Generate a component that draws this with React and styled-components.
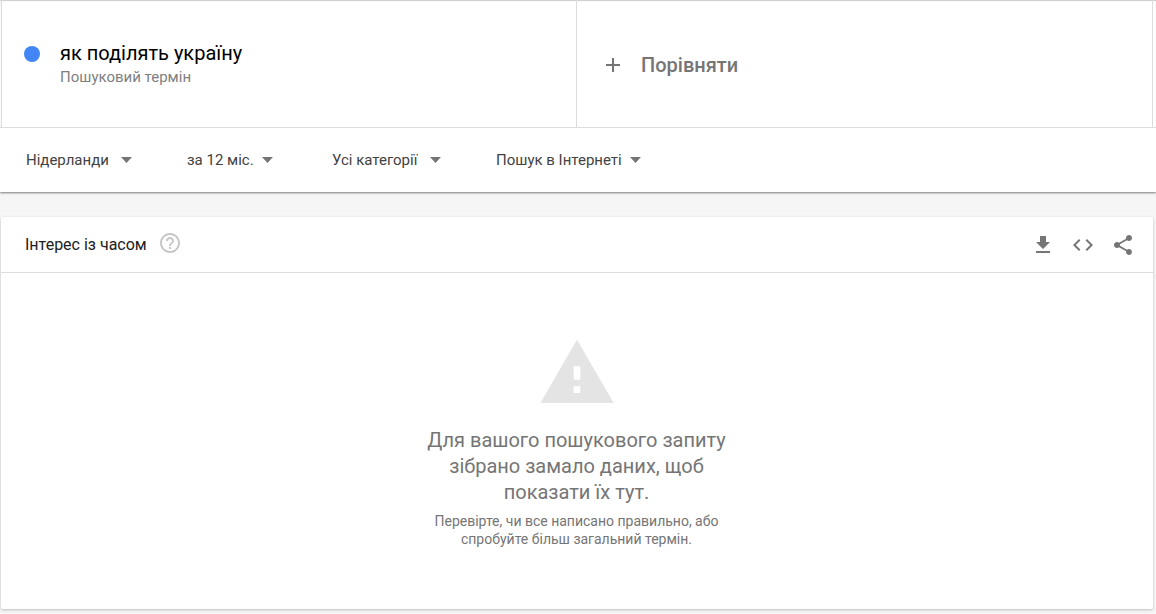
import React from "react";
import styled, { createGlobalStyle } from "styled-components";

const GlobalStyle = createGlobalStyle`
  * { box-sizing: border-box; }
  body {
    margin: 0;
    background: #f6f6f6;
    color: #212121;
    font-family: Roboto, "Liberation Sans", sans-serif;
  }
  button, select { font: inherit; color: inherit; }
  h1, h2, p { margin: 0; font-weight: 400; }
`;

const Header = styled.header`
  background: #fff;
  box-shadow: 0 1px 2px rgba(0, 0, 0, 0.5);
`;

const Terms = styled.div`
  display: grid;
  grid-template-columns: 1fr 1fr;
  height: 128px;
  padding: 0 3px 0 1px;
  border-bottom: 1px solid #dcdcdc;
  box-shadow: inset 0 1px 1px rgba(0, 0, 0, 0.2);
`;

const Term = styled.div`
  display: flex;
  align-items: flex-start;
  gap: 20px;
  padding: 40px 22px 0;
  border: solid #dcdcdc;
  border-width: 0 1px;
`;

const Dot = styled.span`
  width: 16px;
  height: 16px;
  margin-top: 6px;
  border-radius: 50%;
  background: #4285f4;
`;

const TermName = styled.h1`
  font-size: 20px;
  line-height: 26px;
  color: #000;
`;

const TermKind = styled.p`
  font-size: 15px;
  line-height: 22px;
  color: #808080;
`;

const Compare = styled.button`
  display: flex;
  align-items: center;
  gap: 16px;
  padding: 3px 24px 0;
  border: solid #dcdcdc;
  border-width: 0 1px 0 0;
  background: none;
  color: #757575;
  font-size: 20px;
  font-weight: 500;
  cursor: pointer;
`;

const Filters = styled.div`
  display: flex;
  height: 64px;
  padding: 0 26px;
`;

const Filter = styled.label`
  display: flex;
  align-items: center;
  gap: ${(p) => p.$gap}px;
  margin-right: ${(p) => 67 - p.$gap}px;
  color: #424242;
`;

const Select = styled.select`
  appearance: none;
  padding: 0;
  border: 0;
  background: none;
  font-size: 15px;
  line-height: 20px;
  cursor: pointer;
`;

const Card = styled.section`
  margin: 25px 3px 5px 1px;
  border-radius: 2px;
  background: #fff;
  box-shadow: 0 1px 3px rgba(0, 0, 0, 0.24);
`;

const CardHead = styled.div`
  display: flex;
  align-items: center;
  height: 56px;
  padding: 0 18px 0 24px;
  border-bottom: 1px solid #dcdcdc;
`;

const CardTitle = styled.h2`
  margin-right: 11px;
  font-size: 16px;
  line-height: 20px;
`;

const IconButton = styled.button`
  display: flex;
  padding: 0;
  border: 0;
  background: none;
  color: ${(p) => p.$color || "#757575"};
  cursor: pointer;
`;

const HelpButton = styled(IconButton)`
  padding-bottom: 3px;
`;

const Actions = styled.div`
  display: flex;
  gap: 16px;
  margin-left: auto;
`;

const Empty = styled.div`
  display: flex;
  flex-direction: column;
  align-items: center;
  height: 336px;
  padding: 60px 1px 0 0;
  color: #757575;
  text-align: center;
`;

const EmptyTitle = styled.p`
  width: 320px;
  margin-top: 14px;
  font-size: 20px;
  line-height: 26px;
`;

const EmptyHint = styled.p`
  width: 300px;
  margin-top: 7px;
  font-size: 14px;
  line-height: 18px;
`;

function Icon({ d, size = 24, color = "currentColor" }) {
  return (
    <svg width={size} height={size} viewBox="0 0 24 24" fill={color} aria-hidden="true">
      <path d={d} />
    </svg>
  );
}

const icons = {
  plus: "M19 13h-6v6h-2v-6H5v-2h6V5h2v6h6z",
  help: "M11 18h2v-2h-2v2zm1-16C6.48 2 2 6.48 2 12s4.48 10 10 10 10-4.48 10-10S17.52 2 12 2zm0 18c-4.41 0-8-3.59-8-8s3.59-8 8-8 8 3.59 8 8-3.59 8-8 8zm0-14c-2.21 0-4 1.79-4 4h2c0-1.1.9-2 2-2s2 .9 2 2c0 2-3 1.75-3 5h2c0-2.25 3-2.5 3-5 0-2.21-1.79-4-4-4z",
  download: "M19 9h-4V3H9v6H5l7 7 7-7zM5 18v2h14v-2H5z",
  code: "M9.4 16.6L4.8 12l4.6-4.6L8 6l-6 6 6 6 1.4-1.4zm5.2 0l4.6-4.6-4.6-4.6L16 6l6 6-6 6-1.4-1.4z",
  share: "M18 16.08c-.76 0-1.44.3-1.96.77L8.91 12.7c.05-.23.09-.46.09-.7s-.04-.47-.09-.7l7.05-4.11c.54.5 1.25.81 2.04.81 1.66 0 3-1.34 3-3s-1.34-3-3-3-3 1.34-3 3c0 .24.04.47.09.7L8.04 9.81C7.5 9.31 6.79 9 6 9c-1.66 0-3 1.34-3 3s1.34 3 3 3c.79 0 1.5-.31 2.04-.81l7.12 4.16c-.05.21-.08.43-.08.65 0 1.61 1.31 2.92 2.92 2.92 1.61 0 2.92-1.31 2.92-2.92s-1.31-2.92-2.92-2.92z",
  warning: "M1 21h22L12 2 1 21zm12-3h-2v-2h2v2zm0-4h-2v-4h2v4z",
};

const filters = [
  { name: "Регіон", value: "Нідерланди", gap: 12 },
  { name: "Період", value: "за 12 міс.", gap: 8 },
  { name: "Категорія", value: "Усі категорії", gap: 12 },
  { name: "Тип пошуку", value: "Пошук в Інтернеті", gap: 8 },
];

export default function App() {
  return (
    <>
      <GlobalStyle />
      <Header>
        <Terms>
          <Term>
            <Dot />
            <div>
              <TermName>як поділять україну</TermName>
              <TermKind>Пошуковий термін</TermKind>
            </div>
          </Term>
          <Compare type="button">
            <Icon d={icons.plus} />
            Порівняти
          </Compare>
        </Terms>
        <Filters>
          {filters.map((f) => (
            <Filter key={f.name} $gap={f.gap}>
              <Select aria-label={f.name}>
                <option>{f.value}</option>
              </Select>
              <svg width="11" height="6" viewBox="0 0 11 6" fill="#757575" aria-hidden="true">
                <path d="M0 0h11L5.500 6z" />
              </svg>
            </Filter>
          ))}
        </Filters>
      </Header>
      <main>
        <Card>
          <CardHead>
            <CardTitle>Інтерес із часом</CardTitle>
            <HelpButton type="button" aria-label="Довідка" $color="#c6c6c6">
              <Icon d={icons.help} />
            </HelpButton>
            <Actions>
              <IconButton type="button" aria-label="Завантажити">
                <Icon d={icons.download} />
              </IconButton>
              <IconButton type="button" aria-label="Вставити">
                <Icon d={icons.code} />
              </IconButton>
              <IconButton type="button" aria-label="Поділитися">
                <Icon d={icons.share} />
              </IconButton>
            </Actions>
          </CardHead>
          <Empty>
            <Icon d={icons.warning} size={80} color="#e4e4e4" />
            <EmptyTitle>Для вашого пошукового запиту зібрано замало даних, щоб показати їх тут.</EmptyTitle>
            <EmptyHint>Перевірте, чи все написано правильно, або спробуйте більш загальний термін.</EmptyHint>
          </Empty>
        </Card>
      </main>
    </>
  );
}
